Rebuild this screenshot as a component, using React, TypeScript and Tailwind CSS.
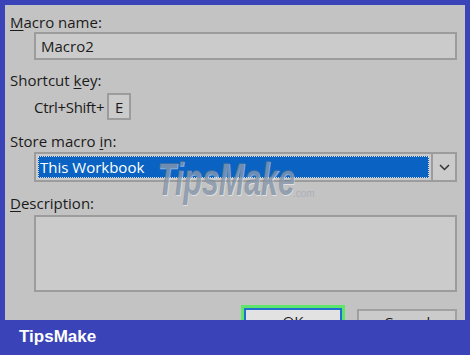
import React from "react";

const U = ({ children }: { children: React.ReactNode }) => (
  <span className="underline decoration-1 underline-offset-[2px]">{children}</span>
);

export default function App() {
  return (
    <div className="w-[470px] h-[355px] bg-[#3a44b8] flex flex-col overflow-hidden" style={{ fontFamily: '"Open Sans", "Noto Sans", sans-serif' }}>
      <div className="pt-[5px] px-[5px] shrink-0">
        <div className="relative h-[315px] bg-[#c3c3c3] overflow-hidden flex flex-col pt-[7px] pl-[5px] pr-[8px] text-[#1b1b1b] text-[15px] leading-[20px]">
          <div className="h-[20px] shrink-0"><U>M</U>acro name:</div>
          <div className="shrink-0 ml-[24px] h-[28px] border-2 border-[#9c9c9c] bg-[#cbcbcb] flex items-center pl-[5px]">Macro2</div>
          <div className="shrink-0 mt-[10px] h-[20px]">Shortcut <U>k</U>ey:</div>
          <div className="shrink-0 mt-[3px] ml-[24px] flex items-center h-[27px]">
            <span className="tracking-[-0.3px]">Ctrl+Shift+</span>
            <div className="ml-[3px] w-[24px] h-[27px] border-2 border-[#9c9c9c] bg-[#cbcbcb] flex items-center justify-center">E</div>
          </div>
          <div className="shrink-0 mt-[11px] h-[20px]">Store macro <U>i</U>n:</div>
          <div className="shrink-0 mt-[1px] ml-[24px] h-[30px] border-2 border-[#9c9c9c] bg-[#cbcbcb] flex">
            <div className="flex-1 p-[2px]">
              <div className="h-full bg-[#0a63c2] border border-dotted border-[#d8d8d8] text-white flex items-center pl-[1px]">This Workbook</div>
            </div>
            <div className="w-[24px] border-l-2 border-[#9c9c9c] flex items-center justify-center">
              <svg width="11" height="7" viewBox="0 0 11 7"><path d="M1 1l4.5 4.5L10 1" stroke="#333" strokeWidth="1.5" fill="none" /></svg>
            </div>
          </div>
          <div className="shrink-0 mt-[11px] h-[20px]"><U>D</U>escription:</div>
          <div className="shrink-0 mt-[2px] ml-[24px] h-[77px] border-2 border-[#9c9c9c] bg-[#cbcbcb]"></div>
          <div className="shrink-0 mt-[13px] flex justify-end gap-[12px]">
            <div className="w-[104px] h-[32px] border-[3px] border-[#5ee66b] p-0">
              <div className="h-full border-2 border-[#1f6fd0] bg-[#e2e2e2] flex justify-center pt-[1px]">OK</div>
            </div>
            <div className="mt-[4px] w-[100px] h-[30px] border-2 border-[#a0a0a0] bg-[#cbcbcb] flex justify-center pt-[1px]">Cancel</div>
          </div>
          <div className="absolute left-[152px] top-[148px] flex items-end pointer-events-none">
            <span className="text-[46px] font-bold italic text-[#5f7590]/60 scale-x-[0.66] origin-left inline-block leading-[52px]" style={{ fontFamily: '"Liberation Sans", Arial, sans-serif', textShadow: "1px 1px 0 rgba(255,255,255,0.5)" }}>TipsMake</span>
          </div>
          <span className="absolute left-[288px] top-[179px] text-[10px] text-[#aab0b8]" style={{ fontFamily: '"Liberation Sans", Arial, sans-serif' }}>.com</span>
        </div>
      </div>
      <div className="flex-1 flex items-center pl-[19px] pb-[2px]">
        <span className="text-white font-bold text-[17px]" style={{ fontFamily: '"Liberation Sans", Arial, sans-serif' }}>TipsMake</span>
      </div>
    </div>
  );
}
